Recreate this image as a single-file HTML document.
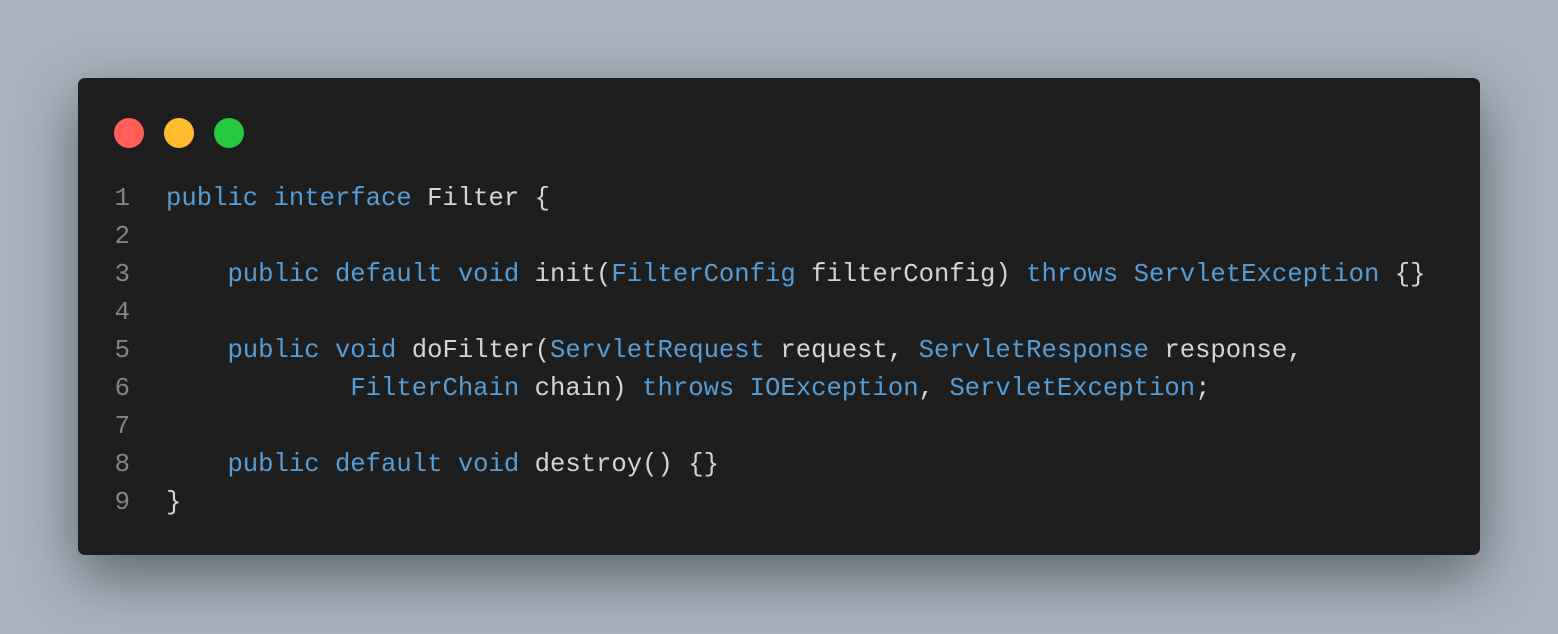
<!DOCTYPE html>
<html><head><style>
html,body{margin:0;padding:0;width:1558px;height:634px;overflow:hidden;background:#a8b3be;}
.win{position:absolute;left:78px;top:78px;width:1402px;height:477px;background:#1e1e1e;border-radius:7px;box-shadow:0 20px 60px rgba(0,0,0,0.45);}
.dot{position:absolute;top:40px;width:30px;height:30px;border-radius:50%;}
.code{position:absolute;left:0;top:102px;font-family:"Liberation Mono",monospace;font-size:25.6px;line-height:38px;color:#d4d4d4;}
.ln{position:absolute;top:0;left:26px;width:26px;text-align:right;color:#858585;white-space:pre;}
.tx{position:absolute;top:0;left:88px;white-space:pre;}
.k{color:#569cd6}
</style></head><body>
<div class="win">
<div class="dot" style="left:36px;background:#ff5f56"></div>
<div class="dot" style="left:86px;background:#ffbd2e"></div>
<div class="dot" style="left:136px;background:#27c93f"></div>
<div class="code"><div class="ln">1
2
3
4
5
6
7
8
9</div><div class="tx"><span class="k">public</span> <span class="k">interface</span> Filter {

    <span class="k">public</span> <span class="k">default</span> <span class="k">void</span> init(<span class="k">FilterConfig</span> filterConfig) <span class="k">throws</span> <span class="k">ServletException</span> {}

    <span class="k">public</span> <span class="k">void</span> doFilter(<span class="k">ServletRequest</span> request, <span class="k">ServletResponse</span> response,
            <span class="k">FilterChain</span> chain) <span class="k">throws</span> <span class="k">IOException</span>, <span class="k">ServletException</span>;

    <span class="k">public</span> <span class="k">default</span> <span class="k">void</span> destroy() {}
}</div></div>
</div>
</body></html>
